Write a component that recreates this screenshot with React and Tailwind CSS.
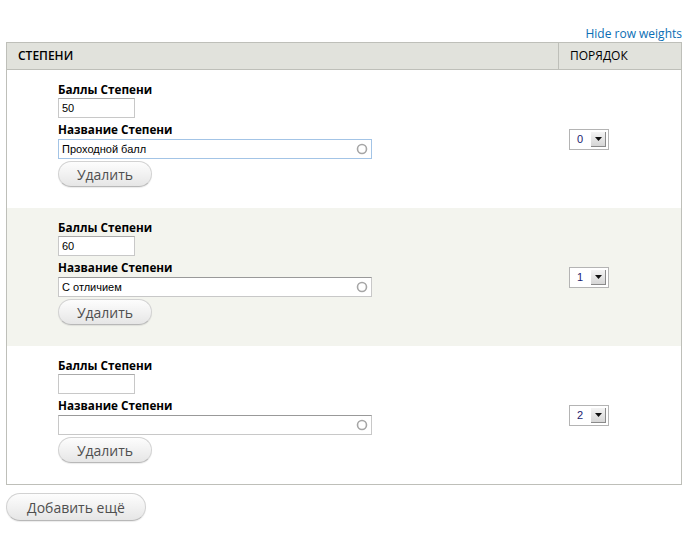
import React from "react";

const rows = [
  { score: "50", name: "Проходной балл", order: "0", focused: true, bg: "bg-white" },
  { score: "60", name: "С отличием", order: "1", focused: false, bg: "bg-[#f3f4ee]" },
  { score: "", name: "", order: "2", focused: false, bg: "bg-white" },
];

function Select({ value }) {
  return (
    <div className="flex h-[21px] w-[40px] items-stretch border border-[#b4b4b4] bg-white p-[2px]">
      <div className="flex flex-1 items-center pl-[5px] text-[11px] leading-none text-[#1a1a6e] [font-family:'Liberation_Sans',Arial,sans-serif]">
        {value}
      </div>
      <div className="flex w-[15px] items-center justify-center border-r border-b border-[#8a8a8a] bg-gradient-to-b from-[#f4f4f4] to-[#d6d6d6]">
        <svg width="7" height="4" viewBox="0 0 7 4">
          <path d="M0 0h7L3.5 4z" fill="#111" />
        </svg>
      </div>
    </div>
  );
}

function Pill({ children, className = "" }) {
  return (
    <div
      className={
        "flex items-center justify-center rounded-full border border-[#d2d2d2] border-b-[#b8b8b8] bg-gradient-to-b from-[#fdfdfd] to-[#e6e6e6] text-[#4f4f4f] shadow-[0_1px_1px_rgba(0,0,0,0.08)] " +
        className
      }
    >
      {children}
    </div>
  );
}

function Row({ r }) {
  return (
    <div className={"grid grid-cols-[1fr_123px] " + r.bg}>
      <div className="flex h-[138px] flex-col pl-[51px] pt-[11px]">
        <div className="h-[16px] text-[11.7px] font-bold leading-[16px] text-black">Баллы Степени</div>
        <div className="mt-[1px] flex h-[20px] w-[77px] items-center border border-[#c8c8c8] border-t-[#aaa] bg-white px-[3px] text-[11px] text-black [font-family:'Liberation_Sans',Arial,sans-serif]">
          {r.score}
        </div>
        <div className="mt-[3px] h-[16px] text-[11.7px] font-bold leading-[16px] text-black">Название Степени</div>
        <div
          className={
            "mt-[2px] flex h-[20px] w-[314px] items-center justify-between bg-white pl-[3px] pr-[3px] text-[11px] text-black [font-family:'Liberation_Sans',Arial,sans-serif] " +
            (r.focused ? "border border-[#a3c4e6]" : "border border-[#c8c8c8] border-t-[#999]")
          }
        >
          <span>{r.name}</span>
          <svg width="12" height="12" viewBox="0 0 12 12">
            <circle cx="6" cy="6" r="4.5" fill="none" stroke="#a6a6a6" strokeWidth="1.6" />
          </svg>
        </div>
        <Pill className="mt-[2px] h-[26px] w-[94px] text-[14px]">Удалить</Pill>
      </div>
      <div className="flex items-center pl-[11px]">
        <Select value={r.order} />
      </div>
    </div>
  );
}

export default function App() {
  return (
    <div className="w-[690px] h-[542px] bg-white pl-[6px] pr-[8px] pt-[25px] [font-family:'Open_Sans','Noto_Sans',sans-serif]">
      <div className="flex h-[17px] justify-end text-[12px] leading-[17px] text-[#0a6eb4]">
        Hide row weights
      </div>
      <div className="border border-[#bebfb9]">
        <div className="grid h-[27px] grid-cols-[1fr_123px] border-b border-[#bebfb9] bg-[#e1e2dc] text-[12px] text-black">
          <div className="flex items-center pl-[11px] font-semibold">СТЕПЕНИ</div>
          <div className="flex items-center border-l border-[#bebfb9] pl-[11px]">ПОРЯДОК</div>
        </div>
        {rows.map((r, i) => (
          <Row key={i} r={r} />
        ))}
      </div>
      <Pill className="mt-[8px] h-[28px] w-[140px] text-[14px]">Добавить ещё</Pill>
    </div>
  );
}
